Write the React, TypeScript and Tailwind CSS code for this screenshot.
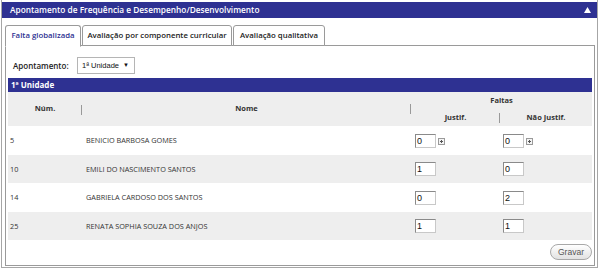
import React from "react";

const rows = [
  { num: "5", name: "BENICIO BARBOSA GOMES", j: "0", n: "0", plus: true, h: "h-[29px]", bg: "bg-white" },
  { num: "10", name: "EMILI DO NASCIMENTO SANTOS", j: "1", n: "0", plus: false, h: "h-[28px]", bg: "bg-[#eeeeee]" },
  { num: "14", name: "GABRIELA CARDOSO DOS SANTOS", j: "0", n: "2", plus: false, h: "h-[29px]", bg: "bg-white" },
  { num: "25", name: "RENATA SOPHIA SOUZA DOS ANJOS", j: "1", n: "1", plus: false, h: "h-[28px]", bg: "bg-[#eeeeee]" },
];

function Plus() {
  return (
    <span className="ml-[2px] mt-[4px] w-[7px] h-[7px] border border-[#9a9a9a] bg-[#f4f4f4] relative inline-block">
      <span className="absolute left-[1px] top-[2px] w-[3px] h-px bg-[#555]" />
      <span className="absolute left-[2px] top-[1px] w-px h-[3px] bg-[#555]" />
    </span>
  );
}

function Box({ v }: { v: string }) {
  return (
    <div className="w-[21px] h-[14px] border border-t-[#8a8a8a] border-l-[#8a8a8a] border-r-[#c8c8c8] border-b-[#c8c8c8] bg-white pl-[1px] text-[9px] leading-[12px] text-[#111] font-['Liberation_Sans',sans-serif]">
      {v}
    </div>
  );
}

export default function App() {
  return (
    <div className="w-[600px] h-[271px] bg-white font-['Open_Sans',sans-serif] text-[#333]">
      <div className="ml-[1px] w-[597px] h-[268px] border-x border-b border-[#a6a6a6] pt-[2px] flex flex-col">
        <div className="h-[16px] bg-[#2e3192] flex items-center justify-between pl-[8px] pr-[6px]">
          <span className="text-white text-[8.3px] font-semibold leading-none whitespace-nowrap">
            Apontamento de Frequência e Desempenho/Desenvolvimento
          </span>
          <svg width="7" height="6" viewBox="0 0 7 6">
            <polygon points="3.5,0 7,6 0,6" fill="#fff" />
          </svg>
        </div>
        <div className="mt-[7px] pl-[3px] flex gap-[1px] h-[21px] relative z-10 -mb-px whitespace-nowrap">
          <div className="w-[76px] h-[22px] border border-[#9a9a9a] border-b-white rounded-t-[3px] bg-white flex items-center justify-center text-[7.8px] font-semibold text-[#2e3192]">
            Falta globalizada
          </div>
          <div className="w-[150px] h-[21px] border border-[#9a9a9a] rounded-t-[3px] bg-white flex items-center justify-center text-[7.8px] font-semibold text-[#222]">
            Avaliação por componente curricular
          </div>
          <div className="w-[92px] h-[21px] border border-[#9a9a9a] rounded-t-[3px] bg-white flex items-center justify-center text-[7.8px] font-semibold text-[#222]">
            Avaliação qualitativa
          </div>
        </div>
        <div className="ml-[3px] w-[590px] flex-1 mb-[1px] border border-[#9a9a9a] flex flex-col">
          <div className="mt-[11px] h-[17px] flex items-center pl-[7px] whitespace-nowrap">
            <span className="text-[8px] font-semibold text-[#222] w-[64px]">Apontamento:</span>
            <div className="w-[58px] h-[17px] border border-[#b5b5b5] bg-white flex items-center justify-between pl-[4px] pr-[5px] font-['Liberation_Sans',sans-serif] text-[7.5px] text-[#111]">
              <span>1ª Unidade</span>
              <span className="text-[6px]">▼</span>
            </div>
          </div>
          <div className="mt-[4px] mx-[2px] w-[584px]">
            <div className="h-[14px] bg-[#2e3192] flex items-center pl-[3px] text-white text-[8px] font-bold">
              1ª Unidade
            </div>
            <div className="h-[34px] bg-[#eeeeee] grid grid-cols-[74px_329px_181px] text-[7.5px] font-bold text-[#333]">
              <div className="flex items-center justify-center relative">
                Núm.
                <span className="absolute right-0 top-[13px] w-px h-[10px] bg-[#999]" />
              </div>
              <div className="flex items-center justify-center relative">
                Nome
                <span className="absolute right-0 top-[12px] w-px h-[10px] bg-[#999]" />
              </div>
              <div className="flex flex-col">
                <div className="h-[17px] flex items-center justify-center pt-[1px]">Faltas</div>
                <div className="grid grid-cols-[89px_92px] h-[17px]">
                  <div className="flex items-center justify-center relative">
                    Justif.
                    <span className="absolute right-0 top-[4px] w-px h-[10px] bg-[#999]" />
                  </div>
                  <div className="flex items-center justify-center">Não Justif.</div>
                </div>
              </div>
            </div>
            {rows.map((r) => (
              <div key={r.num} className={`${r.h} ${r.bg} grid grid-cols-[74px_329px_89px_92px] items-center text-[7.3px] text-[#333]`}>
                <div className="pl-[2px]">{r.num}</div>
                <div className="pl-[4px] whitespace-nowrap">{r.name}</div>
                <div className="pl-[4px] flex items-start">
                  <Box v={r.j} />
                  {r.plus && <Plus />}
                </div>
                <div className="pl-[3px] flex items-start">
                  <Box v={r.n} />
                  {r.plus && <Plus />}
                </div>
              </div>
            ))}
            <div className="mt-[4px] flex justify-end">
              <button className="w-[42px] h-[16px] rounded-full border border-[#a8a8a8] bg-gradient-to-b from-white to-[#e2e2e2] text-[8.5px] text-[#555] font-['Liberation_Sans',sans-serif] leading-none">
                Gravar
              </button>
            </div>
          </div>
        </div>
      </div>
    </div>
  );
}
